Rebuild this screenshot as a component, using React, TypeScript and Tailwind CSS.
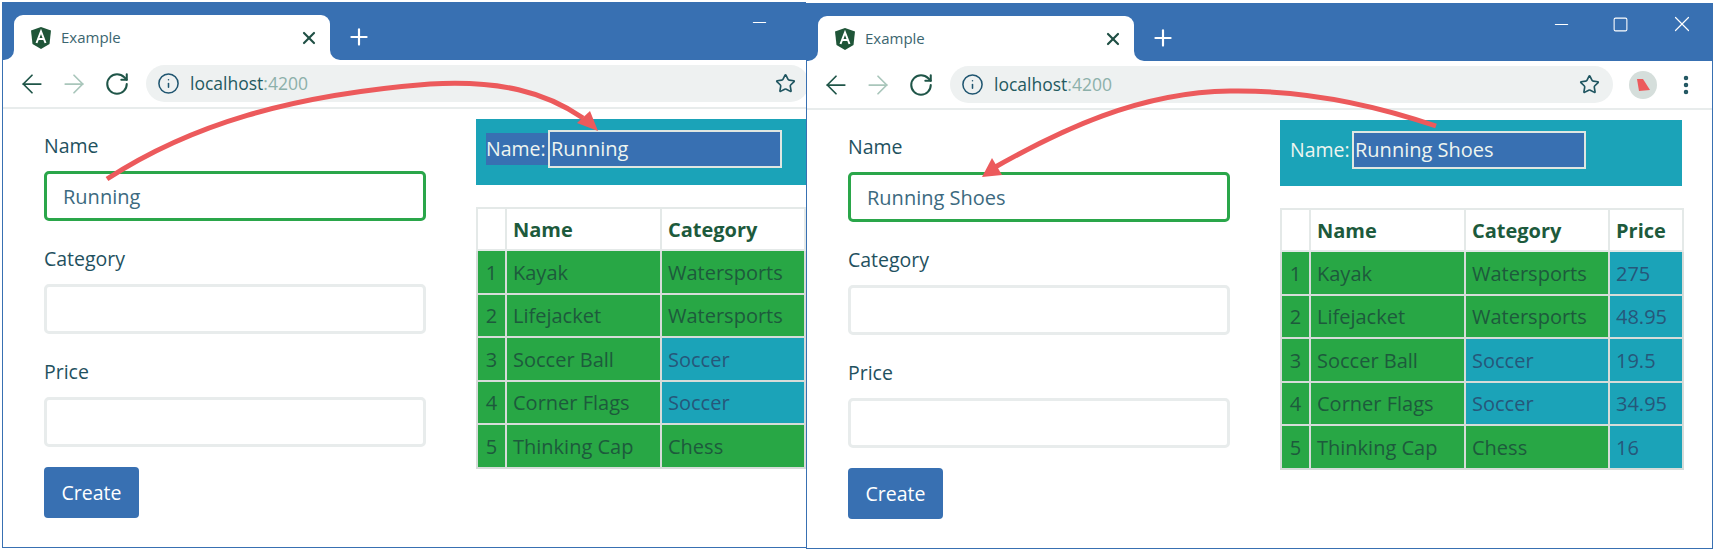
import { ArrowLeft, ArrowRight, RotateCw, Info, Star, X, Plus, Minus, Square, EllipsisVertical } from "lucide-react";

const FONT = "font-['Open_Sans','Noto_Sans',sans-serif]";
const GREEN = "bg-[#28a745] text-[#1d5a3c]";
const TEAL = "bg-[#1ba3b8] text-[#26577a]";

const rows: [string, string, string, string, boolean][] = [
  ["1", "Kayak", "Watersports", "275", false],
  ["2", "Lifejacket", "Watersports", "48.95", false],
  ["3", "Soccer Ball", "Soccer", "19.5", true],
  ["4", "Corner Flags", "Soccer", "34.95", true],
  ["5", "Thinking Cap", "Chess", "16", false],
];

function AngularLogo() {
  return (
    <svg width="22" height="22" viewBox="0 0 22 22" className="shrink-0">
      <polygon points="11,0 21,3.5 19.5,17 11,22 2.5,17 1,3.5" fill="#1f5538" />
      <path d="M6.5 16 L11 4.5 L15.5 16 M8 12 H14" fill="none" stroke="#ffffff" strokeWidth="2" />
    </svg>
  );
}

function Field({ label, value, focused }: { label: string; value?: string; focused?: boolean }) {
  return (
    <div className="mb-[24px] flex flex-col">
      <div className="mb-[10px] h-[29px] text-[19.5px] leading-[27px] text-[#1f5160]">{label}</div>
      <div
        className={`flex h-[50px] items-center rounded-[5px] border-[3px] pl-[16px] pt-[2px] text-[20px] text-[#3c6a80] ${
          focused ? "border-[#2aa64a]" : "border-[#e8ecec]"
        }`}
      >
        {value}
      </div>
    </div>
  );
}

function Window({
  value,
  labelBlue,
  full,
}: {
  value: string;
  labelBlue?: boolean;
  full?: boolean;
}) {
  return (
    <div
      className={`flex h-[546px] shrink-0 flex-col overflow-hidden border-b border-l border-[#3870b2] bg-white ${
        full ? "mt-[1px] w-[907px] border-r" : "w-[804px]"
      }`}
    >
      {/* Title band */}
      <div className="flex h-[58px] shrink-0 items-end bg-[#3870b2] pl-[1px]">
        <div className="h-[10px] w-[10px] self-end bg-white">
          <div className="h-full w-full rounded-br-[10px] bg-[#3870b2]" />
        </div>
        <div className="flex h-[45px] w-[316px] items-center rounded-t-[9px] bg-white pl-[16px]">
          <AngularLogo />
          <span className="ml-[9px] text-[15px] text-[#3b6670]">Example</span>
          <X size={20} strokeWidth={2.6} className="ml-auto mr-[11px] text-[#1f4f44]" />
        </div>
        <div className="h-[10px] w-[10px] self-end bg-white">
          <div className="h-full w-full rounded-bl-[10px] bg-[#3870b2]" />
        </div>
        <Plus size={26} strokeWidth={2} className="mb-[10px] ml-[6px] text-white" />
        {full ? (
          <div className="mb-[24px] ml-auto flex items-center gap-[40px] pr-[17px] text-white">
            <Minus size={21} strokeWidth={1.25} />
            <Square size={17} strokeWidth={1.5} />
            <X size={26} strokeWidth={1.1} />
          </div>
        ) : (
          <Minus size={21} strokeWidth={1.25} className="mb-[27px] ml-auto mr-[36px] text-white" />
        )}
      </div>

      {/* Toolbar */}
      <div className="flex h-[49px] shrink-0 items-center border-b-2 border-[#e8ecec] pl-[14px]">
        <ArrowLeft size={30} strokeWidth={1.4} className="shrink-0 text-[#1f5548]" />
        <ArrowRight size={30} strokeWidth={1.4} className="ml-[12px] shrink-0 text-[#a9c6bb]" />
        <RotateCw size={26} strokeWidth={1.9} className="ml-[15px] shrink-0 text-[#1f5548]" />
        <div className="ml-[16px] flex h-[37px] w-[663px] shrink-0 items-center rounded-full bg-[#eef1f1] pl-[11px]">
          <Info size={23} strokeWidth={1.6} className="text-[#1f5570]" />
          <span className="ml-[10px] text-[17.5px] text-[#235a60]">
            localhost<span className="text-[#8cb0aa]">:4200</span>
          </span>
          <Star size={21} strokeWidth={1.9} className="ml-auto mr-[13px] text-[#1f5560]" />
        </div>
        {full && (
          <>
            <div className="ml-[16px] flex h-[28px] w-[28px] shrink-0 items-center justify-center rounded-full bg-[#d5dedb]">
              <svg width="16" height="14" viewBox="0 0 16 14">
                <polygon points="2,1 8,1 15,12 4,13" fill="#ec5a5c" />
              </svg>
            </div>
            <EllipsisVertical size={24} strokeWidth={2.5} className="ml-[17px] shrink-0 text-[#1f5560]" />
          </>
        )}
      </div>

      {/* Content */}
      <div className={`flex min-h-0 flex-1 pl-[41px] ${FONT}`}>
        <div className="w-[382px] shrink-0 pt-[23px]">
          <Field label="Name" value={value} focused />
          <Field label="Category" />
          <Field label="Price" />
          <div className="-mt-[4px] flex h-[51px] w-[95px] items-center justify-center rounded-[4px] bg-[#3870b2] text-[19.5px] text-white">
            Create
          </div>
        </div>

        <div className="ml-[50px] w-[402px] shrink-0 pt-[10px]">
          <div className="flex h-[66px] items-center bg-[#1ba3b8] pb-[7px] pl-[10px] text-[19.5px] text-[#eef5f0]">
            <span className={`flex h-[32px] w-[62px] items-center whitespace-nowrap ${labelBlue ? "bg-[#3870b2]" : ""}`}>Name:</span>
            <div className="flex h-[38px] w-[234px] items-center border-2 border-[#dfe7e2] bg-[#3870b2] pl-[1px] text-[20px]">
              {value}
            </div>
          </div>

          <table className={`mt-[22px] table-fixed border-collapse text-[20px] ${full ? "w-[402px]" : "w-[328px]"}`}>
            <colgroup>
              <col className="w-[29px]" />
              <col className="w-[155px]" />
              <col className="w-[144px]" />
              {full && <col className="w-[74px]" />}
            </colgroup>
            <thead>
              <tr className="h-[42px] text-[20px] font-bold text-[#1d5a3c]">
                <th className="border-2 border-[#e4e9e8]" />
                <th className="border-2 border-[#e4e9e8] pl-[6px] pt-[2px] text-left">Name</th>
                <th className="border-2 border-[#e4e9e8] pl-[6px] pt-[2px] text-left">Category</th>
                {full && <th className="border-2 border-[#e4e9e8] pl-[6px] pt-[2px] text-left">Price</th>}
              </tr>
            </thead>
            <tbody>
              {rows.map(([n, name, cat, price, catTeal]) => (
                <tr key={n} className="h-[43.5px]">
                  <td className={`border-2 border-[#d6dcd9] pt-[2px] text-center ${GREEN}`}>{n}</td>
                  <td className={`border-2 border-[#d6dcd9] pl-[6px] pt-[2px] ${GREEN}`}>{name}</td>
                  <td className={`border-2 border-[#d6dcd9] pl-[6px] pt-[2px] ${catTeal ? TEAL : GREEN}`}>{cat}</td>
                  {full && <td className={`border-2 border-[#d6dcd9] pl-[6px] pt-[2px] ${TEAL}`}>{price}</td>}
                </tr>
              ))}
            </tbody>
          </table>
        </div>
      </div>
    </div>
  );
}

export default function App() {
  return (
    <div className={`relative flex h-[551px] w-[1716px] overflow-hidden bg-white pl-[2px] pt-[2px] ${FONT}`}>
      <Window value="Running" labelBlue />
      <Window value="Running Shoes" full />
      <svg className="pointer-events-none absolute inset-0" width="1716" height="551" viewBox="0 0 1716 551">
        <path
          d="M107 179 C190 125 290 95 430 84 C500 80 545 92 583 118"
          fill="none"
          stroke="#ec5a5c"
          strokeWidth="5"
        />
        <polygon points="590,111 577,123 598,131" fill="#ec5a5c" />
        <path
          d="M1436 126 C1360 100 1290 90 1230 91 C1140 92 1060 130 990 170"
          fill="none"
          stroke="#ec5a5c"
          strokeWidth="5"
        />
        <polygon points="992,158 1002,175 982,177" fill="#ec5a5c" />
      </svg>
    </div>
  );
}
